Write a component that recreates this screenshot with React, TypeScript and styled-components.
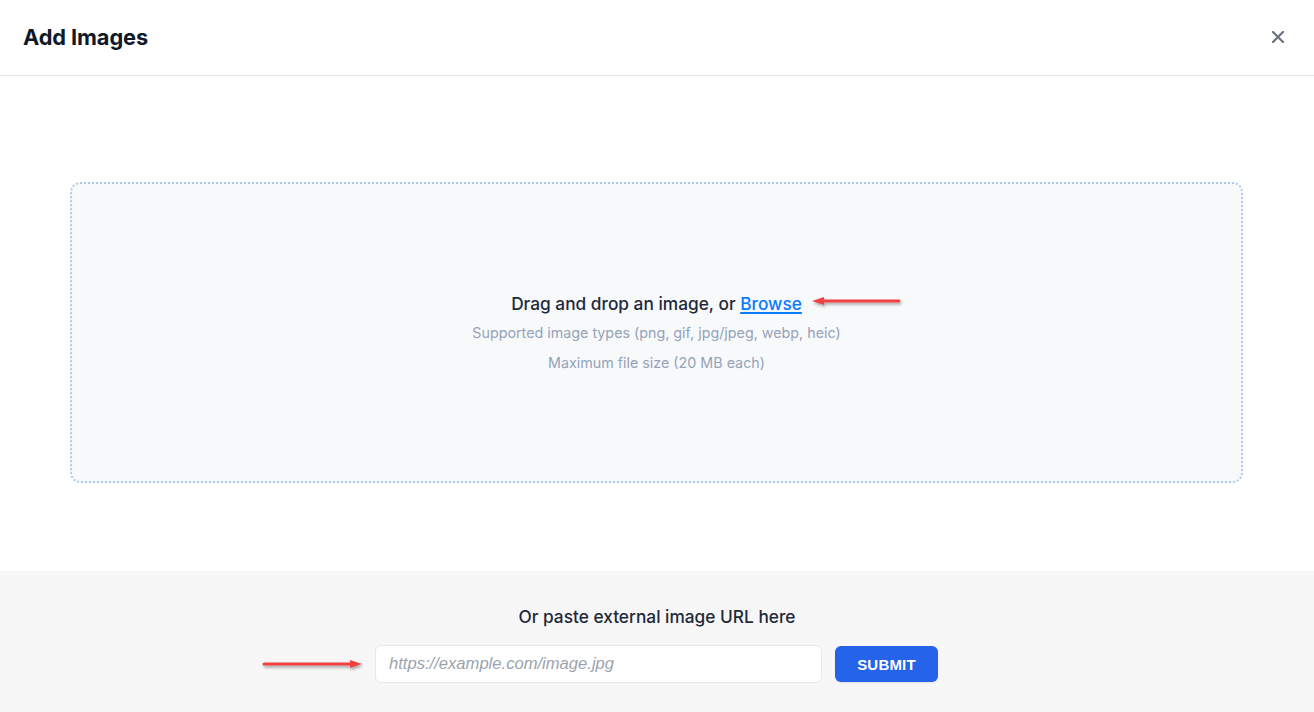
import React from "react";
import styled, { createGlobalStyle } from "styled-components";

const GlobalStyle = createGlobalStyle`
  html, body {
    margin: 0;
    padding: 0;
    background: #ffffff;
    font-family: Inter, "Noto Sans", "Liberation Sans", sans-serif;
    color: #1e293b;
  }
`;

const Page = styled.div`
  position: relative;
  width: 1314px;
  height: 712px;
  display: flex;
  flex-direction: column;
  overflow: hidden;
`;

const Header = styled.div`
  height: 76px;
  box-sizing: border-box;
  display: flex;
  align-items: center;
  justify-content: space-between;
  padding: 0 26px 2px 23px;
  border-bottom: 1px solid #e5e7eb;
`;

const Title = styled.h2`
  margin: 0;
  font-size: 21.8px;
  font-weight: 700;
  color: #111827;
  letter-spacing: -0.1px;
`;

const CloseButton = styled.button`
  border: none;
  background: transparent;
  padding: 4px;
  display: flex;
  align-items: center;
  justify-content: center;
  cursor: pointer;
`;

const Body = styled.div`
  flex: 1;
  display: flex;
  flex-direction: column;
  padding: 106px 71px 88px 70px;
`;

const DropZone = styled.div`
  flex: 1;
  box-sizing: border-box;
  border: 2px dotted #adc9f0;
  border-radius: 10px;
  background: #f8f9fb;
  display: flex;
  flex-direction: column;
  align-items: center;
  justify-content: center;
  padding-top: 6px;
`;

const DropText = styled.div`
  position: relative;
  font-size: 17.3px;
  font-weight: 500;
  color: #1e293b;
  margin-bottom: 4px;
`;

const BrowseLink = styled.a`
  color: #0a7aff;
  text-decoration: underline;
  text-decoration-thickness: 1.5px;
  text-underline-offset: 2px;
  cursor: pointer;
`;

const Hint = styled.div`
  font-size: 14.3px;
  color: #94a3b8;
  line-height: 30px;
`;

const Footer = styled.div`
  height: 141px;
  background: #f7f7f7;
  display: flex;
  flex-direction: column;
  align-items: center;
  padding-top: 35px;
  box-sizing: border-box;
`;

const FooterLabel = styled.div`
  font-size: 17.3px;
  font-weight: 500;
  color: #1e293b;
  margin-bottom: 18px;
`;

const UrlRow = styled.form`
  position: relative;
  display: flex;
  align-items: center;
  gap: 13px;
  margin-right: 1px;
`;

const UrlInput = styled.input`
  width: 447px;
  height: 38px;
  box-sizing: border-box;
  border: 1px solid #e2e8f0;
  border-radius: 6px;
  background: #ffffff;
  padding: 0 13px;
  font-family: "Liberation Sans", Arial, sans-serif;
  font-size: 16.6px;
  color: #1e293b;
  outline: none;

  &::placeholder {
    color: #9ca3af;
    font-style: italic;
  }
`;

const SubmitButton = styled.button`
  width: 103px;
  height: 36px;
  border: none;
  border-radius: 6px;
  background: #2563eb;
  color: #ffffff;
  font-family: "Liberation Sans", Arial, sans-serif;
  font-weight: 700;
  font-size: 15px;
  letter-spacing: 0.2px;
  cursor: pointer;
  box-shadow: 0 1px 2px rgba(0, 0, 0, 0.08);
`;

const Arrow = styled.svg<{ $left: number; $top: number }>`
  position: absolute;
  left: ${p => p.$left}px;
  top: ${p => p.$top}px;
  overflow: visible;
  pointer-events: none;
`;

const RedArrow = ({
  left,
  top,
  width,
  dir,
}: {
  left: number;
  top: number;
  width: number;
  dir: "left" | "right";
}) => {
  const y = 6;
  const line =
    dir === "left" ? `M${width} ${y} L10 ${y}` : `M0 ${y} L${width - 10} ${y}`;
  const head =
    dir === "left"
      ? `M0 ${y} L12 ${y - 4} L12 ${y + 4} Z`
      : `M${width} ${y} L${width - 12} ${y - 4} L${width - 12} ${y + 4} Z`;
  return (
    <Arrow $left={left} $top={top} width={width} height={12}>
      <defs>
        <filter id={`sh-${dir}`} x="-20%" y="-100%" width="140%" height="400%">
          <feDropShadow dx="1" dy="2" stdDeviation="1.5" floodColor="#000" floodOpacity="0.35" />
        </filter>
      </defs>
      <g filter={`url(#sh-${dir})`}>
        <path d={line} stroke="#f04343" strokeWidth="3" strokeLinecap="round" />
        <path d={head} fill="#f04343" />
      </g>
    </Arrow>
  );
};

export default function App() {
  return (
    <Page>
      <GlobalStyle />
      <Header>
        <Title>Add Images</Title>
        <CloseButton aria-label="Close">
          <svg width="12" height="12" viewBox="0 0 12 12">
            <path d="M1 1 L11 11 M11 1 L1 11" stroke="#6b7280" strokeWidth="2.2" strokeLinecap="round" />
          </svg>
        </CloseButton>
      </Header>
      <Body>
        <DropZone>
          <DropText>
            Drag and drop an image, or <BrowseLink>Browse</BrowseLink>
          </DropText>
          <Hint>Supported image types (png, gif, jpg/jpeg, webp, heic)</Hint>
          <Hint>Maximum file size (20 MB each)</Hint>
        </DropZone>
      </Body>
      <Footer>
        <FooterLabel>Or paste external image URL here</FooterLabel>
        <UrlRow onSubmit={e => e.preventDefault()}>
          <UrlInput placeholder="https://example.com/image.jpg" />
          <SubmitButton type="submit">SUBMIT</SubmitButton>
        </UrlRow>
      </Footer>
      <RedArrow left={812} top={295} width={87} dir="left" />
      <RedArrow left={264} top={658} width={98} dir="right" />
    </Page>
  );
}
